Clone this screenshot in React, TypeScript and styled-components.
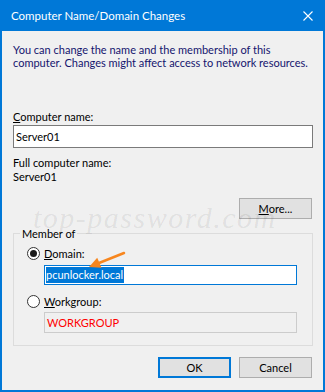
import styled, { createGlobalStyle } from "styled-components";

const GlobalStyle = createGlobalStyle`
  html, body {
    margin: 0;
    padding: 0;
    background: #ffffff;
  }
  body {
    font-family: Lato, "Liberation Sans", Arial, sans-serif;
    font-size: 11px;
    color: #000000;
  }
`;

const Window = styled.div`
  width: 325px;
  height: 392px;
  box-sizing: border-box;
  padding: 0 2px 2px;
  background: #0078d7;
  display: flex;
  flex-direction: column;
`;

const TitleBar = styled.div`
  height: 31px;
  flex-shrink: 0;
  display: flex;
  align-items: center;
  justify-content: space-between;
  padding: 0 10px 0 9px;
  color: #ffffff;
  font-size: 11.5px;
`;

const Body = styled.div`
  position: relative;
  flex: 1;
  background: #f0f0f0;
  padding: 12px 10px 0 11px;
  display: flex;
  flex-direction: column;
`;

const Intro = styled.p`
  margin: 0;
  line-height: 13px;
  white-space: nowrap;
  color: #14146e;
`;

const Label = styled.div<{ $top: number }>`
  margin-top: ${(p) => p.$top}px;
  line-height: 13px;
  white-space: nowrap;
  color: #000000;
`;

const TextBox = styled.div<{ $height: number; $top: number; $variant?: "focus" | "disabled" }>`
  margin-top: ${(p) => p.$top}px;
  height: ${(p) => p.$height}px;
  box-sizing: border-box;
  display: flex;
  align-items: center;
  padding: 0 2px;
  overflow: hidden;
  white-space: nowrap;
  background: ${(p) => (p.$variant === "disabled" ? "#f0f0f0" : "#ffffff")};
  border: 1px solid
    ${(p) =>
      p.$variant === "focus" ? "#0078d7" : p.$variant === "disabled" ? "#cccccc" : "#7a7a7a"};
  color: ${(p) => (p.$variant === "disabled" ? "#ff0000" : "#000000")};
`;

const Selected = styled.span`
  margin-left: -1px;
  padding-right: 1px;
  background: #0078d7;
  color: #ffffff;
  line-height: 16px;
`;

const Button = styled.div<{ $default?: boolean }>`
  width: 73px;
  height: 21px;
  box-sizing: border-box;
  display: flex;
  align-items: center;
  justify-content: center;
  background: #e1e1e1;
  border: ${(p) => (p.$default ? "2px solid #0078d7" : "1px solid #adadad")};
  color: #000000;
`;

const MoreRow = styled.div`
  margin-top: 15px;
  display: flex;
  justify-content: flex-end;
  padding-right: 1px;
`;

const Group = styled.fieldset`
  position: relative;
  margin: 8px 0 0;
  padding: 0;
  border: 1px solid #dcdcdc;
  min-width: 0;
`;

const Legend = styled.legend`
  margin-left: 6px;
  padding: 0 2px;
  line-height: 13px;
`;

const GroupInner = styled.div`
  padding: 7px 15px 12px 13px;
  display: flex;
  flex-direction: column;
`;

const RadioRow = styled.div<{ $top: number }>`
  margin-top: ${(p) => p.$top}px;
  display: flex;
  align-items: center;
  gap: 4px;
  line-height: 13px;
`;

const Radio = styled.span<{ $checked?: boolean }>`
  width: 13px;
  height: 13px;
  box-sizing: border-box;
  border-radius: 50%;
  border: 1px solid #333333;
  background: #ffffff;
  display: flex;
  align-items: center;
  justify-content: center;

  &::after {
    content: "";
    display: ${(p) => (p.$checked ? "block" : "none")};
    width: 7px;
    height: 7px;
    border-radius: 50%;
    background: #1a1a1a;
  }
`;

const Indented = styled.div`
  margin-left: 17px;
  display: flex;
  flex-direction: column;
`;

const Footer = styled.div`
  margin-top: 11px;
  display: flex;
  justify-content: flex-end;
  gap: 8px;
  padding-right: 1px;
`;

const Watermark = styled.div`
  position: absolute;
  left: 31px;
  top: 172px;
  font-family: "Liberation Serif", "Times New Roman", serif;
  font-style: italic;
  font-size: 30px;
  line-height: 30px;
  letter-spacing: 1.5px;
  color: rgba(0, 0, 0, 0.08);
  pointer-events: none;
  white-space: nowrap;
`;

const Arrow = styled.svg`
  position: absolute;
  left: 70px;
  top: 8px;
  overflow: visible;
`;

export default function App() {
  return (
    <>
      <GlobalStyle />
      <Window>
        <TitleBar>
          <span>Computer Name/Domain Changes</span>
          <svg width="10" height="10" viewBox="0 0 10 10">
            <path d="M0.5 0.5 L9.5 9.5 M9.5 0.5 L0.5 9.5" stroke="#ffffff" strokeWidth="1.1" fill="none" />
          </svg>
        </TitleBar>
        <Body>
          <Intro>
            You can change the name and the membership of this
            <br />
            computer. Changes might affect access to network resources.
          </Intro>

          <Label $top={41}>
            <u>C</u>omputer name:
          </Label>
          <TextBox $top={2} $height={23}>
            Server01
          </TextBox>

          <Label $top={8}>Full computer name:</Label>
          <Label $top={1}>Server01</Label>

          <MoreRow>
            <Button>
              <u>M</u>ore...
            </Button>
          </MoreRow>

          <Group>
            <Legend>Member of</Legend>
            <Arrow width="45" height="25" viewBox="0 0 45 25">
              <path d="M40 5 L15 15" stroke="#f7861e" strokeWidth="2.5" strokeLinecap="round" fill="none" />
              <polygon points="5,19 17.5,19.8 13.2,9.8" fill="#f7861e" />
            </Arrow>
            <GroupInner>
              <RadioRow $top={0}>
                <Radio $checked />
                <span>
                  <u>D</u>omain:
                </span>
              </RadioRow>
              <Indented>
                <TextBox $top={5} $height={20} $variant="focus">
                  <Selected>pcunlocker.local</Selected>
                </TextBox>
              </Indented>
              <RadioRow $top={10}>
                <Radio />
                <span>
                  <u>W</u>orkgroup:
                </span>
              </RadioRow>
              <Indented>
                <TextBox $top={4} $height={21} $variant="disabled">
                  WORKGROUP
                </TextBox>
              </Indented>
            </GroupInner>
          </Group>

          <Footer>
            <Button $default>OK</Button>
            <Button>Cancel</Button>
          </Footer>

          <Watermark>top-password.com</Watermark>
        </Body>
      </Window>
    </>
  );
}
